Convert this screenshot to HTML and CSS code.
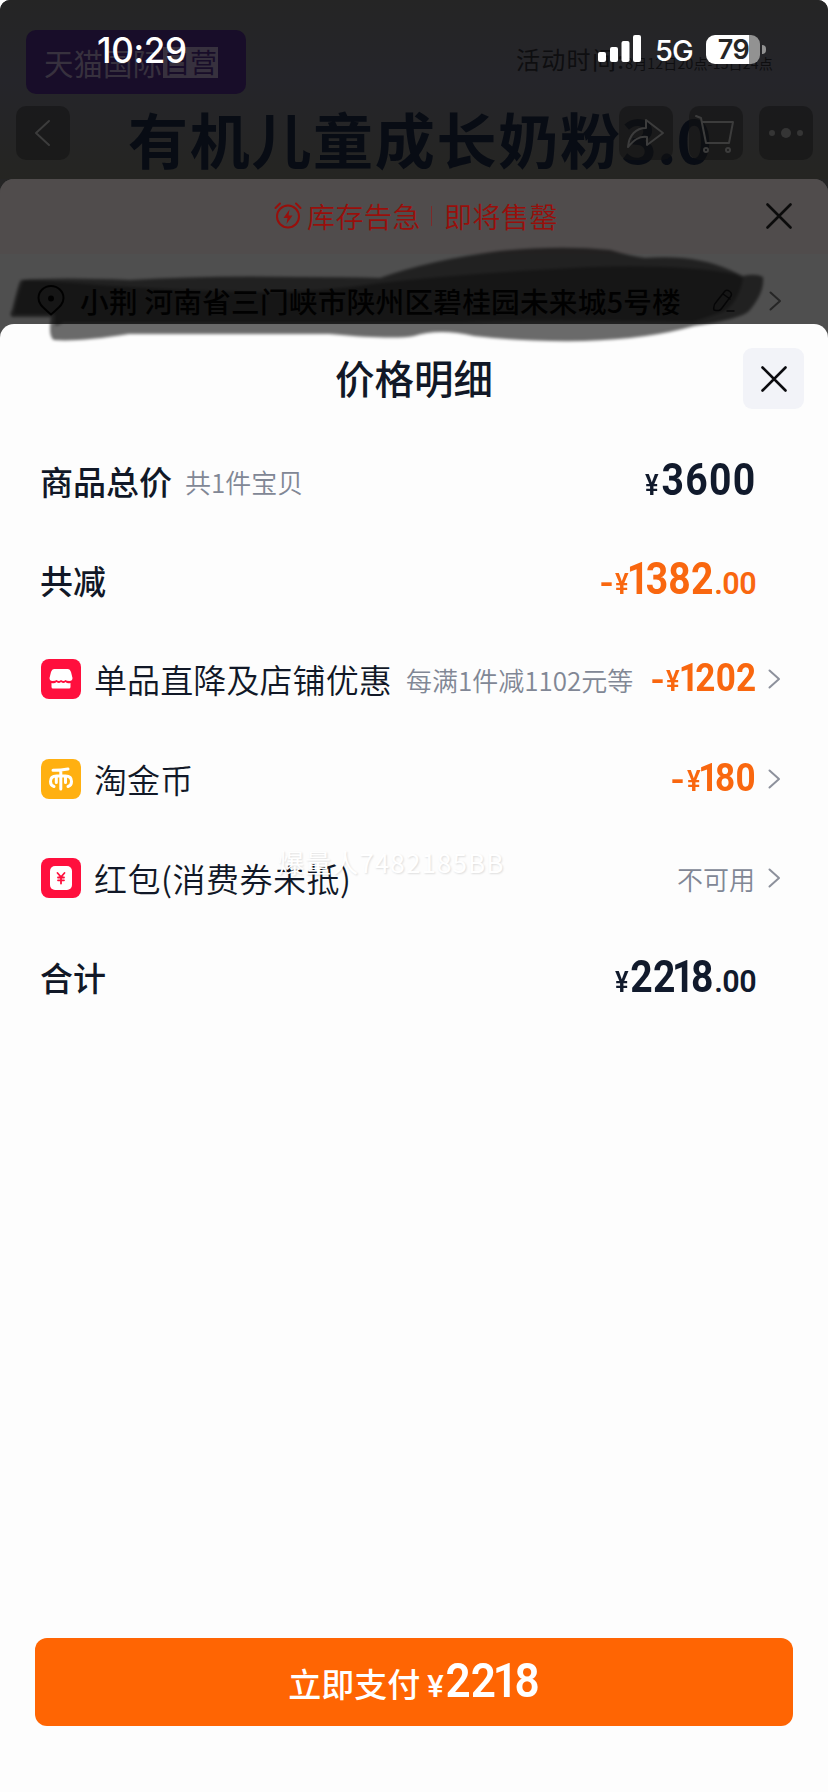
FILE: index.html
```html
<!DOCTYPE html>
<html lang="zh-CN">
<head>
<meta charset="utf-8">
<title>价格明细</title>
<link rel="stylesheet" href="styles.css">
</head>
<body>
<div class="phone">
  <header class="backdrop">
    <div class="promo">
      <div class="brand">天猫国际<span class="brand-tag">自营</span></div>
      <div class="period">活动时间:<small>8月12日20点-15日24点</small></div>
    </div>
    <div class="hero">有机儿童成长奶粉<span>3.0</span></div>
    <div class="nav">
      <span class="nav-btn"><svg viewBox="0 0 54 54"><path d="M33 15 20 27l13 12"/></svg></span>
      <span class="nav-gap"></span>
      <span class="nav-btn"><svg viewBox="0 0 54 54"><path d="M27 14 44 27 28 39v-8c-8-1-13 3-19 10 1-12 8-19 18-19z"/></svg></span>
      <span class="nav-btn"><svg viewBox="0 0 54 54"><path d="M7 10l5 2 5 25h23l4-21H13"/><circle cx="17" cy="44" r="2"/><circle cx="39" cy="44" r="2"/></svg></span>
      <span class="nav-btn"><svg viewBox="0 0 54 54" class="dots"><circle cx="13" cy="27" r="3"/><circle cx="27" cy="27" r="5"/><circle cx="41" cy="27" r="3"/></svg></span>
    </div>
    <div class="status">
      <span class="clock">10:29</span>
      <svg class="signal" viewBox="0 0 43 28"><rect x="0" y="17" width="8" height="10" rx="2"/><rect x="12" y="12" width="8" height="15" rx="2"/><rect x="23.500" y="6" width="8" height="21" rx="2"/><rect x="35" y="0" width="8" height="27" rx="2"/></svg>
      <span class="network">5G</span>
      <span class="battery">79</span><span class="battery-tip"></span>
    </div>
  </header>

  <section class="order">
    <div class="stock">
      <svg class="alarm" viewBox="0 0 28 28"><circle cx="14" cy="14.500" r="11"/><path d="M1.500 6 6 1.500M22 1.500 26.500 6"/><path class="bolt" d="M15.500 7.500 9.500 16h4l-1 6 6-8.500h-4z"/></svg>
      <span>库存告急</span><i class="bar"></i><span>即将售罄</span>
      <svg class="order-close" viewBox="0 0 26 26"><path d="M1.500 1.500l23 23M24.500 1.500l-23 23"/></svg>
    </div>
    <div class="address">
      <svg class="pin" viewBox="0 0 28 32"><path d="M14 29.500C7 23 1.500 20 1.500 13a12.500 12 0 0 1 25 0c0 7-5.500 10-12.500 16.500z"/><circle cx="14" cy="13.500" r="2"/></svg>
      <span>小荆 河南省三门峡市陕州区碧桂园未来城5号楼</span>
      <svg class="edit" viewBox="0 0 24 26"><path d="M2 22c-1-4 0-6 3-9l8-10c2-2 8 1 6 5l-9 12c-2 3-4 3-8 2zM11 6l7 5M15 23h7"/></svg>
      <svg class="chev" viewBox="0 0 13 20"><path d="M1.500 1.500 11 10l-9.500 8.500"/></svg>
    </div>
  </section>

  <main class="sheet">
    <div class="sheet-head">
      <h1>价格明细</h1>
      <button class="close"><svg viewBox="0 0 26 26"><path d="M1.500 1.500l23 23M24.500 1.500l-23 23"/></svg></button>
    </div>
    <ul class="rows">
      <li class="row"><b>商品总价</b><small>共1件宝贝</small><span class="price"><i>¥</i><span class="num wide">3600</span></span></li>
      <li class="row"><b>共减</b><span class="price off"><em>-</em><i>¥</i><span class="num"><u>1</u>382</span><span class="dec">.00</span></span></li>
      <li class="row"><svg class="badge" viewBox="0 0 40 40"><rect width="40" height="40" rx="8" fill="#ff0f3d"/><path d="M13 10h14q2 0 3 3l1.500 6q0 3-3 3t-4-1q-2 2-4.500 0-2 2-4.500 0-1 1-4 1t-3-3l1.500-6q1-3 3-3z" fill="#fff"/><path d="M10.500 24q3 1 5-1 2.500 2 4.500 0 2.500 2 4.500 0 2 2 5 1v4q0 1.500-1.500 1.500H12q-1.500 0-1.500-1.500z" fill="#fff"/></svg>
        <span class="name">单品直降及店铺优惠</span><small class="note">每满1件减1102元等</small><span class="price off small"><em>-</em><i>¥</i><span class="num"><u>1</u>202</span></span><svg class="chev" viewBox="0 0 13 20"><path d="M1.500 1.500 11 10l-9.500 8.500"/></svg></li>
      <li class="row"><svg class="badge" viewBox="0 0 40 40"><rect width="40" height="40" rx="8" fill="#ffb011"/><path d="M12 11.300q8 0 15-1.300M19.800 11v19M13 27.500q-3.500-1-3.500-5 0-5.500 6-5.500h9q6 0 6 5.500 0 4-3.500 5M15.300 17.500v6M24.500 17.500v6" fill="none" stroke="#fff" stroke-width="3"/></svg>
        <span class="name">淘金币</span><span class="price off small"><em>-</em><i>¥</i><span class="num three"><u>1</u>80</span></span><svg class="chev" viewBox="0 0 13 20"><path d="M1.500 1.500 11 10l-9.500 8.500"/></svg></li>
      <li class="row"><svg class="badge" viewBox="0 0 40 40"><rect width="40" height="40" rx="8" fill="#ff0f3d"/><rect x="9" y="8" width="22" height="24" rx="5" fill="#fff"/><path d="M16.500 15l3.500 4 3.500-4M17 19.500h6M17 22.300h6M20 19v6.500" fill="none" stroke="#ff0f3d" stroke-width="1.800"/></svg>
        <span class="name packet">红包(消费券未抵)</span><span class="unavailable">不可用</span><svg class="chev" viewBox="0 0 13 20"><path d="M1.500 1.500 11 10l-9.500 8.500"/></svg></li>
      <li class="row"><b>合计</b><span class="price"><i>¥</i><span class="num">22<u>1</u>8</span><span class="dec">.00</span></span></li>
    </ul>
    <div class="watermark">爆量人7482185BB</div>
    <button class="pay"><span>立即支付</span><i>¥</i><span class="num">22<u>1</u>8</span></button>
  </main>

  <svg class="marker" viewBox="0 0 828 360">
    <defs><filter id="soft" x="-5%" y="-20%" width="110%" height="140%"><feGaussianBlur stdDeviation="1.800"/></filter></defs>
    <g filter="url(#soft)">
      <path fill-opacity=".58" d="M21 280Q60 277 130 280 210 275 300 277 345 277 380 278 430 260 500 251q60-6 110-1 20 6 35 8 50-4 85 12l13 6q13-3 20 1 2 15-14 34-8 8-55 15-45 13-110 15-60 1-110-5-35-8-60 0-20 4-85-2-120 0-200 0-50 8-75 6-6-3-3-23H12q-3-3 0-7 7-29 9-30z"/>
      <path fill-opacity=".35" d="M75 283q60 5 140 8 90 4 165-8 90-10 210-16 90-3 145 7l8 4q-4 24-20 34l-30 10q-150-3-230 0-150 0-210 0H63q-2 3-8 4v-12H14q5-24 10-34z"/>
    </g>
  </svg>
</div>
</body>
</html>
```
FILE: styles.css
```css
* { box-sizing: border-box; margin: 0; padding: 0; }
body { background: #fff; font-family: "Noto Sans CJK SC", sans-serif; color: #111827; }
svg { display: block; fill: none; stroke: currentColor; stroke-linecap: round; stroke-linejoin: round; flex: none; }
i, em { font-style: normal; }
u { text-decoration: none; }
button { border: 0; font-family: inherit; color: inherit; }
.phone { position: relative; width: 828px; height: 1792px; overflow: hidden; background: #252525; border-radius: 10px 10px 0 0; }

.backdrop { position: relative; height: 179px; background: linear-gradient(#252525, #25252a 45%, #252522); }
.promo { display: flex; justify-content: space-between; padding: 30px 49px 0 26px; height: 106px; }
.brand { display: flex; align-items: center; width: 220px; height: 64px; padding-left: 18px; border-radius: 10px; background: #180d29; color: #37313e; font-size: 29.500px; font-weight: 400; white-space: nowrap; }
.brand-tag { margin-left: 1px; height: 31px; line-height: 30px; width: 55px; background: #37313e; color: #180d29; font-size: 27px; }
.period { width: 264px; padding-top: 17px; line-height: 24px; height: 50px; font-size: 24px; letter-spacing: 1.300px; color: #0e0e10; white-space: nowrap; padding-left: 1px; }
.period small { font-size: 14px; letter-spacing: .2px; }
.hero { position: absolute; left: 128px; top: 94px; font-size: 60px; line-height: 88px; font-weight: 700; letter-spacing: 1.700px; color: #080c14; white-space: nowrap; }
.hero span { letter-spacing: 0; }
.nav { position: relative; display: flex; gap: 16px; padding: 0 15px 0 16px; }
.nav-gap { flex: 1; }
.nav-btn { width: 54px; height: 54px; border-radius: 10px; background: rgba(18, 18, 18, .55); color: #3c3c3c; }
.nav-btn svg { width: 54px; height: 54px; stroke-width: 2; }
.nav-btn .dots { fill: #353535; stroke: none; }
.status { position: absolute; left: 0; top: 0; width: 100%; height: 98px; display: flex; align-items: center; padding: 0 62px 0 97px; color: #fff; font-family: Inter, sans-serif; }
.clock { flex: 1; font-size: 35px; font-weight: 550; line-height: 40px; letter-spacing: -.3px; margin-top: 1px; }
.signal { width: 43px; height: 28px; fill: #fff; stroke: none; }
.network { margin-left: 14px; width: 38px; font-size: 29px; font-weight: 450; letter-spacing: -1px; margin-top: 3px; }
.battery { margin-left: 13px; width: 54px; height: 29px; padding-left: 1px; border-radius: 9px; background: linear-gradient(90deg, #fff 79%, #929292 79%); color: #252525; font-size: 27px; font-weight: 600; line-height: 29px; letter-spacing: -.5px; text-align: center; }
.battery-tip { width: 4px; height: 9px; margin-left: 2px; border-radius: 0 5px 5px 0; background: #929292; }

.order { height: 160px; background: #4f4f4f; border-radius: 14px 14px 0 0; overflow: hidden; }
.stock { display: flex; align-items: center; height: 75px; padding: 0 0 1px 274px; background: #504c4c; color: #980f0b; font-size: 28px; letter-spacing: .5px; line-height: 40px; font-weight: 350; }
.alarm { width: 28px; height: 28px; stroke-width: 2; margin-right: 5px; }
.alarm .bolt { fill: currentColor; stroke: none; }
.bar { width: 1px; height: 20px; margin: 0 12px 0 10px; background: #7d2a29; }
.order-close { width: 26px; height: 26px; margin-left: auto; margin-right: 36px; color: #0b0b0b; stroke-width: 2.600; }
.address { display: flex; align-items: center; height: 92px; padding: 1px 46px 0 37px; font-size: 28.700px; font-weight: 500; letter-spacing: .2px; line-height: 42px; color: #050505; white-space: nowrap; }
.pin { width: 28px; height: 32px; margin-right: 15px; stroke-width: 2; }
.pin circle { fill: currentColor; }
.edit { width: 24px; height: 26px; margin-left: auto; margin-right: 33px; stroke-width: 1.500; color: #121215; }
.chev { width: 13px; height: 20px; color: #8d919c; stroke-width: 2; }
.address .chev { color: #262626; }

.sheet { position: absolute; left: 0; top: 324px; width: 828px; height: 1468px; display: flex; flex-direction: column; background: #fdfdfd; border-radius: 14px 14px 0 0; }
.sheet-head { display: grid; grid-template-columns: 61px 1fr 61px; align-items: center; height: 107px; padding: 2px 24px 0; }
.sheet-head h1 { grid-column: 2; text-align: center; font-size: 39.500px; line-height: 58px; font-weight: 500; padding-bottom: 4px; }
.close { width: 61px; height: 61px; border-radius: 9px; background: #f2f3f8; display: grid; place-items: center; color: #0b0b0f; }
.close svg { width: 26px; height: 26px; stroke-width: 2.600; }
.rows { list-style: none; padding: 0 47px 0 41px; }
.row { display: flex; align-items: center; height: 99.300px; font-size: 33px; line-height: 48px; white-space: nowrap; }
.row b { font-weight: 500; margin-left: -1px; }
.row small { font-size: 26px; font-weight: 350; color: #818795; margin: 2px 0 0 13px; }
.row .note { letter-spacing: 0; margin-left: 14px; }
.badge { width: 40px; height: 40px; stroke: none; }
.name { margin-left: 13px; font-weight: 350; letter-spacing: .1px; }
.packet { letter-spacing: .5px; }
.price { margin: 5px 25px 0 auto; display: flex; align-items: baseline; font-family: Roboto, sans-serif; font-weight: 700; color: #111a2c; }
.price.off { color: #f9670f; }
.price i { font-size: 29px; transform: scaleX(.88); font-weight: 600; }
.price em { font-size: 34px; margin-right: 1px; transform: scaleX(1.100); }
.num { display: inline-block; font-size: 43.500px; font-weight: 700; letter-spacing: .2px; transform: scaleX(.9); transform-origin: right; margin-left: -9px; }
.wide { letter-spacing: 1.400px; }
.num u { margin: 0 -4px; }
.dec { font-size: 30.500px; font-weight: 600; letter-spacing: -.6px; margin-left: 1px; }
.price.small { margin: 1px 12px 0 auto; }
.small .num { font-size: 39px; margin-left: -7px; }
.small .three { margin-left: -5px; }
.unavailable { margin: 2px 13px 0 auto; color: #818795; font-size: 26px; font-weight: 350; }
.watermark { position: absolute; left: 278px; top: 519px; font-size: 26px; line-height: 38px; color: #fff; text-shadow: 1px 1px 2px rgba(0, 0, 0, .13); letter-spacing: 1.100px; }
.pay { width: 758px; height: 88px; margin: auto 35px 66px; border-radius: 12px; background: #ff6503; color: #fff; display: flex; justify-content: center; align-items: baseline; font-size: 33px; line-height: 86px; font-weight: 500; }
.pay i { font: 500 31px Roboto, sans-serif; margin-left: 7px; }
.pay .num { font-family: Roboto, sans-serif; font-size: 49px; font-weight: 650; }
.marker { position: absolute; left: 0; top: 0; width: 828px; height: 360px; fill: #000; stroke: none; pointer-events: none; }
```
